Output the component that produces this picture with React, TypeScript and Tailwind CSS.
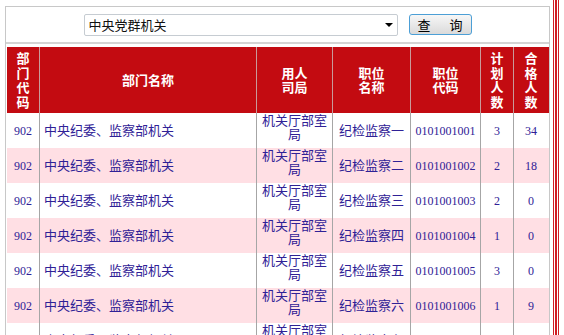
const rows = [
  { code: '0101001001', name: '纪检监察一', plan: '3', pass: '34' },
  { code: '0101001002', name: '纪检监察二', plan: '2', pass: '18' },
  { code: '0101001003', name: '纪检监察三', plan: '2', pass: '0' },
  { code: '0101001004', name: '纪检监察四', plan: '1', pass: '0' },
  { code: '0101001005', name: '纪检监察五', plan: '3', pass: '0' },
  { code: '0101001006', name: '纪检监察六', plan: '1', pass: '9' },
  { code: '0101001007', name: '纪检监察七', plan: '1', pass: '5' },
]

const cjk = '[font-family:"Noto_Sans_CJK_SC",sans-serif]'
const grid = 'grid grid-cols-[33px_217px_76px_78px_70px_33px_34px]'

export default function App() {
  return (
    <div className="flex h-[335px] w-[564px] overflow-hidden bg-white">
      <div className="w-[5px] shrink-0" />

      <div className="mt-[6px] w-[545px] shrink-0 border-x border-t border-[#c8c8c8]">
        {/* search bar */}
        <div className="flex h-[37px] items-center justify-center gap-[11px] border-b-2 border-[#d4d4d4]">
          <div className="relative flex h-[22px] w-[314px] items-center rounded-[2px] border border-[#c6ccd2] bg-white pl-[4px]">
            <span className={`${cjk} text-[13px] leading-none text-[#111]`}>中央党群机关</span>
            <span className="absolute right-[4px] top-[8px] h-0 w-0 border-x-[4px] border-t-[4px] border-x-transparent border-t-black" />
          </div>
          <button className="flex h-[21px] w-[63px] items-center justify-center gap-[19px] rounded-[3px] border border-[#4c9fd6] bg-gradient-to-b from-[#f7f7f7] to-[#dadada]">
            <span className={`${cjk} text-[13px] leading-none text-black`}>查</span>
            <span className={`${cjk} text-[13px] leading-none text-black`}>询</span>
          </button>
        </div>

        {/* table */}
        <div className="pl-[1px] pt-[3px]">
          <div className={`${grid} h-[66px] bg-[#c30b11] ${cjk} text-[13px] font-bold leading-[14.5px] text-white`}>
            <div className="flex items-center justify-center border-r border-[#c99a9a] text-center">部<br />门<br />代<br />码</div>
            <div className="flex items-center justify-center border-r border-[#c99a9a]">部门名称</div>
            <div className="flex items-center justify-center border-r border-[#c99a9a] text-center">用人<br />司局</div>
            <div className="flex items-center justify-center border-r border-[#c99a9a] text-center">职位<br />名称</div>
            <div className="flex items-center justify-center border-r border-[#c99a9a] text-center">职位<br />代码</div>
            <div className="flex items-center justify-center border-r border-[#c99a9a] text-center">计<br />划<br />人<br />数</div>
            <div className="flex items-center justify-center text-center">合<br />格<br />人<br />数</div>
          </div>

          {rows.map((r, i) => (
            <div
              key={r.code}
              className={`${grid} h-[35px] ${i % 2 === 1 ? 'bg-[#ffdfe4]' : 'bg-white'} [font-family:"Liberation_Serif","Noto_Sans_CJK_SC",serif] text-[12px] text-[#2f2196]`}
            >
              <div className="flex items-center justify-center border-r border-[#a6a6a6]">902</div>
              <div className="flex items-center border-r border-[#a6a6a6] pl-[4px] text-[13px]">中央纪委、监察部机关</div>
              <div className="border-r border-[#a6a6a6] px-[5px] pt-[1px] text-center text-[13px] leading-[14px]">机关厅部室局</div>
              <div className="flex items-center justify-center border-r border-[#a6a6a6] text-[13px]">{r.name}</div>
              <div className="flex items-center justify-center border-r border-[#a6a6a6]">{r.code}</div>
              <div className="flex items-center justify-center border-r border-[#a6a6a6]">{r.plan}</div>
              <div className="flex items-center justify-center">{r.pass}</div>
            </div>
          ))}
        </div>
      </div>

      {/* outer page border */}
      <div className="ml-[3px] flex h-full shrink-0 gap-[1px]">
        <div className="w-[1px] bg-[#d01c22]" />
        <div className="w-[2px] bg-[#d01c22]" />
        <div className="w-[1px] bg-[#d01c22]" />
      </div>
    </div>
  )
}
